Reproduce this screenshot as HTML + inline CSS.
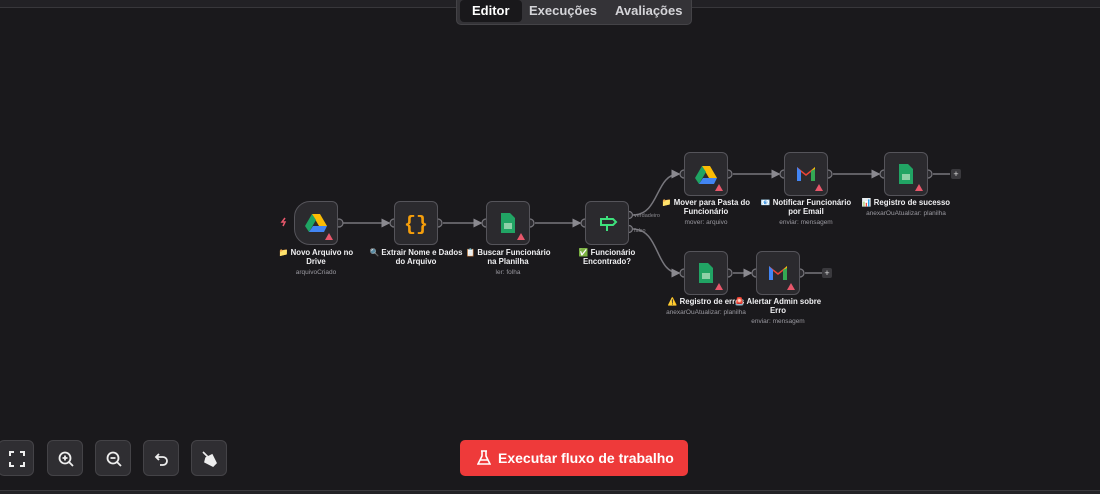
<!DOCTYPE html>
<html><head><meta charset="utf-8"><style>
*{margin:0;padding:0;box-sizing:border-box}
body{width:1100px;height:494px;background:#1a191c;font-family:"Liberation Sans","Noto Sans CJK SC",sans-serif;position:relative;overflow:hidden;color:#e8e8ea}
.top{position:absolute;left:0;top:0;width:1100px;height:8px;background:#222125;border-bottom:1px solid #38373b}
.tabs{position:absolute;left:456px;top:-4px;width:236px;height:29px;background:#343337;border-radius:5px;border:1px solid #444347}
.tab{position:absolute;top:3px;height:22px;font-size:13px;font-weight:bold;line-height:22px;color:#d4d4d8}
.tab.a{background:#19181b;color:#fff;border-radius:4px;padding:0 12px;left:3px}
.node{position:absolute;width:44px;height:44px;background:#2b2a2e;border:1.5px solid #55545a;border-radius:6px}
.node .w{position:absolute;right:4px;bottom:4px;width:0;height:0;border-left:4px solid transparent;border-right:4px solid transparent;border-bottom:7px solid #e8576b}
.lbl{position:absolute;width:140px;text-align:center;font-size:7.8px;font-weight:bold;color:#f0f0f2;line-height:9px}
.sub{display:block;font-weight:normal;color:#9a99a0;font-size:6.5px;margin-top:2px}
.btn{position:absolute;top:440px;width:36px;height:36px;background:#2f2e32;border:1px solid #444347;border-radius:6px}
.run{position:absolute;left:460px;top:440px;width:228px;height:36px;background:#ee3a3a;border-radius:5px;color:#fff;font-size:14px;font-weight:bold;line-height:36px;padding-left:38px}
.bot{position:absolute;left:0;top:490px;width:1100px;height:4px;background:#232226;border-top:1px solid #3a393d}
</style></head><body>
<div class="top"></div>
<div class="tabs">
<div class="tab a">Editor</div>
<div class="tab" style="left:72px">Execuções</div>
<div class="tab" style="left:158px">Avaliações</div>
</div>

<svg width="1100" height="494" style="position:absolute;left:0;top:0">
<defs><marker id="ar" markerWidth="6" markerHeight="6" refX="5" refY="3" orient="auto"><path d="M0,0L6,3L0,6z" fill="#8a898f"/></marker></defs>
<g stroke="#78777d" stroke-width="1.5" fill="none">
<path d="M343,223H389" marker-end="url(#ar)"/>
<path d="M443,223H481" marker-end="url(#ar)"/>
<path d="M535,223H580" marker-end="url(#ar)"/>
<path d="M633,215C660,215 655,174 679,174" marker-end="url(#ar)"/>
<path d="M633,229C660,229 655,273 679,273" marker-end="url(#ar)"/>
<path d="M733,174H779" marker-end="url(#ar)"/>
<path d="M833,174H879" marker-end="url(#ar)"/>
<path d="M733,273H751" marker-end="url(#ar)"/>
<path d="M933,174H950"/>
<path d="M805,273H822"/>
</g>
<g fill="#2b2a2e" stroke="#78777d" stroke-width="1.2">
<circle cx="339" cy="223" r="4"/><circle cx="394" cy="223" r="4"/><circle cx="438" cy="223" r="4"/>
<circle cx="486" cy="223" r="4"/><circle cx="530" cy="223" r="4"/><circle cx="585" cy="223" r="4"/>
<circle cx="629" cy="215" r="3.5"/><circle cx="629" cy="229" r="3.5"/>
<circle cx="684" cy="174" r="4"/><circle cx="728" cy="174" r="4"/><circle cx="784" cy="174" r="4"/><circle cx="828" cy="174" r="4"/><circle cx="884" cy="174" r="4"/><circle cx="928" cy="174" r="4"/>
<circle cx="684" cy="273" r="4"/><circle cx="728" cy="273" r="4"/><circle cx="756" cy="273" r="4"/><circle cx="800" cy="273" r="4"/>
</g>
<rect x="951" y="169" width="10" height="10" rx="2" fill="#3a393d"/><text x="956" y="177" font-size="9" fill="#ddd" text-anchor="middle" font-family="Liberation Sans">+</text>
<rect x="822" y="268" width="10" height="10" rx="2" fill="#3a393d"/><text x="827" y="276" font-size="9" fill="#ddd" text-anchor="middle" font-family="Liberation Sans">+</text>
<text x="634" y="217" font-size="5.5" fill="#8a898f" font-family="Liberation Sans">verdadeiro</text>
<text x="634" y="232" font-size="5.5" fill="#8a898f" font-family="Liberation Sans">falso</text>
<path d="M285,218l-3,4h3l-2,4" stroke="#e8576b" stroke-width="1.5" fill="none"/>
</svg>

<div class="node" style="left:294px;top:201px;border-radius:16px 6px 6px 16px"><div class="w"></div></div>
<div class="node" style="left:394px;top:201px"></div>
<div class="node" style="left:486px;top:201px"><div class="w"></div></div>
<div class="node" style="left:585px;top:201px"></div>
<div class="node" style="left:684px;top:152px"><div class="w"></div></div>
<div class="node" style="left:784px;top:152px"><div class="w"></div></div>
<div class="node" style="left:884px;top:152px"><div class="w"></div></div>
<div class="node" style="left:684px;top:251px"><div class="w"></div></div>
<div class="node" style="left:756px;top:251px"><div class="w"></div></div>

<svg width="1100" height="494" style="position:absolute;left:0;top:0">
<defs>
<g id="drive"><path d="M-4,-8h8l7,12h-8z" fill="#fbbc04"/><path d="M-4,-8L-11,4l4,6L0,-2z" fill="#1fa463"/><path d="M-7,10h15l3,-6h-14z" fill="#4285f4"/></g>
<g id="sheet"><path d="M-7,-10h9l5,5v15h-14z" fill="#21a464"/><rect x="-4" y="0" width="8" height="6" fill="#8ed1a8"/></g>
<g id="gmail"><path d="M-9,-7v14h4v-9l5,4 5,-4v9h4v-14l-9,7z" fill="#ea4335"/><path d="M-9,-7v14h4v-10z" fill="#4285f4"/><path d="M9,-7v14h-4v-10z" fill="#34a853"/><path d="M5,-3l4,-4v2z" fill="#fbbc04"/></g>
</defs>
<use href="#drive" x="316" y="222"/>
<text x="416" y="230" font-size="20" fill="#f59e0b" text-anchor="middle" font-family="Liberation Mono" font-weight="bold">{}</text>
<use href="#sheet" x="508" y="223"/>
<path d="M601,219h12l3,3-3,3h-12zM607,219v-3M607,225v6" stroke="#3ee07c" stroke-width="2" fill="none"/>
<use href="#drive" x="706" y="174"/>
<use href="#gmail" x="806" y="174"/>
<use href="#sheet" x="906" y="174"/>
<use href="#sheet" x="706" y="273"/>
<use href="#gmail" x="778" y="273"/>
</svg>

<div class="lbl" style="left:246px;top:248px">📁 Novo Arquivo no<br>Drive<span class="sub">arquivoCriado</span></div>
<div class="lbl" style="left:346px;top:248px">🔍 Extrair Nome e Dados<br>do Arquivo</div>
<div class="lbl" style="left:438px;top:248px">📋 Buscar Funcionário<br>na Planilha<span class="sub">ler: folha</span></div>
<div class="lbl" style="left:537px;top:248px">✅ Funcionário<br>Encontrado?</div>
<div class="lbl" style="left:636px;top:198px">📁 Mover para Pasta do<br>Funcionário<span class="sub">mover: arquivo</span></div>
<div class="lbl" style="left:736px;top:198px">📧 Notificar Funcionário<br>por Email<span class="sub">enviar: mensagem</span></div>
<div class="lbl" style="left:836px;top:198px">📊 Registro de sucesso<span class="sub">anexarOuAtualizar: planilha</span></div>
<div class="lbl" style="left:636px;top:297px">⚠️ Registro de erros<span class="sub">anexarOuAtualizar: planilha</span></div>
<div class="lbl" style="left:708px;top:297px">🚨 Alertar Admin sobre<br>Erro<span class="sub">enviar: mensagem</span></div>

<div class="btn" style="left:-2px"><svg width="36" height="36"><path d="M11,15v-4h4M21,11h4v4M25,21v4h-4M15,25h-4v-4" stroke="#eee" stroke-width="2" fill="none"/></svg></div>
<div class="btn" style="left:47px"><svg width="36" height="36"><circle cx="17" cy="17" r="5.5" stroke="#eee" stroke-width="1.8" fill="none"/><path d="M21,21l4,4M17,14.5v5M14.5,17h5" stroke="#eee" stroke-width="1.8"/></svg></div>
<div class="btn" style="left:95px"><svg width="36" height="36"><circle cx="17" cy="17" r="5.5" stroke="#eee" stroke-width="1.8" fill="none"/><path d="M21,21l4,4M14.5,17h5" stroke="#eee" stroke-width="1.8"/></svg></div>
<div class="btn" style="left:143px"><svg width="36" height="36"><path d="M15,13l-3,3 3,3M12,16h7a4,4 0 0 1 0,8h-3" stroke="#eee" stroke-width="1.8" fill="none"/></svg></div>
<div class="btn" style="left:191px"><svg width="36" height="36"><path d="M11,11l5,5M14,17l6,-3 4,8 -3,3 -8,-4z" stroke="#eee" stroke-width="1.6" fill="#eee"/></svg></div>
<div class="run"><svg width="14" height="16" style="position:absolute;left:17px;top:10px"><path d="M4,1h6M5,1v5L1,14h12L9,6V1M3,10h8" stroke="#fff" stroke-width="1.6" fill="none"/></svg>Executar fluxo de trabalho</div>
<div class="bot"></div>
</body></html>
